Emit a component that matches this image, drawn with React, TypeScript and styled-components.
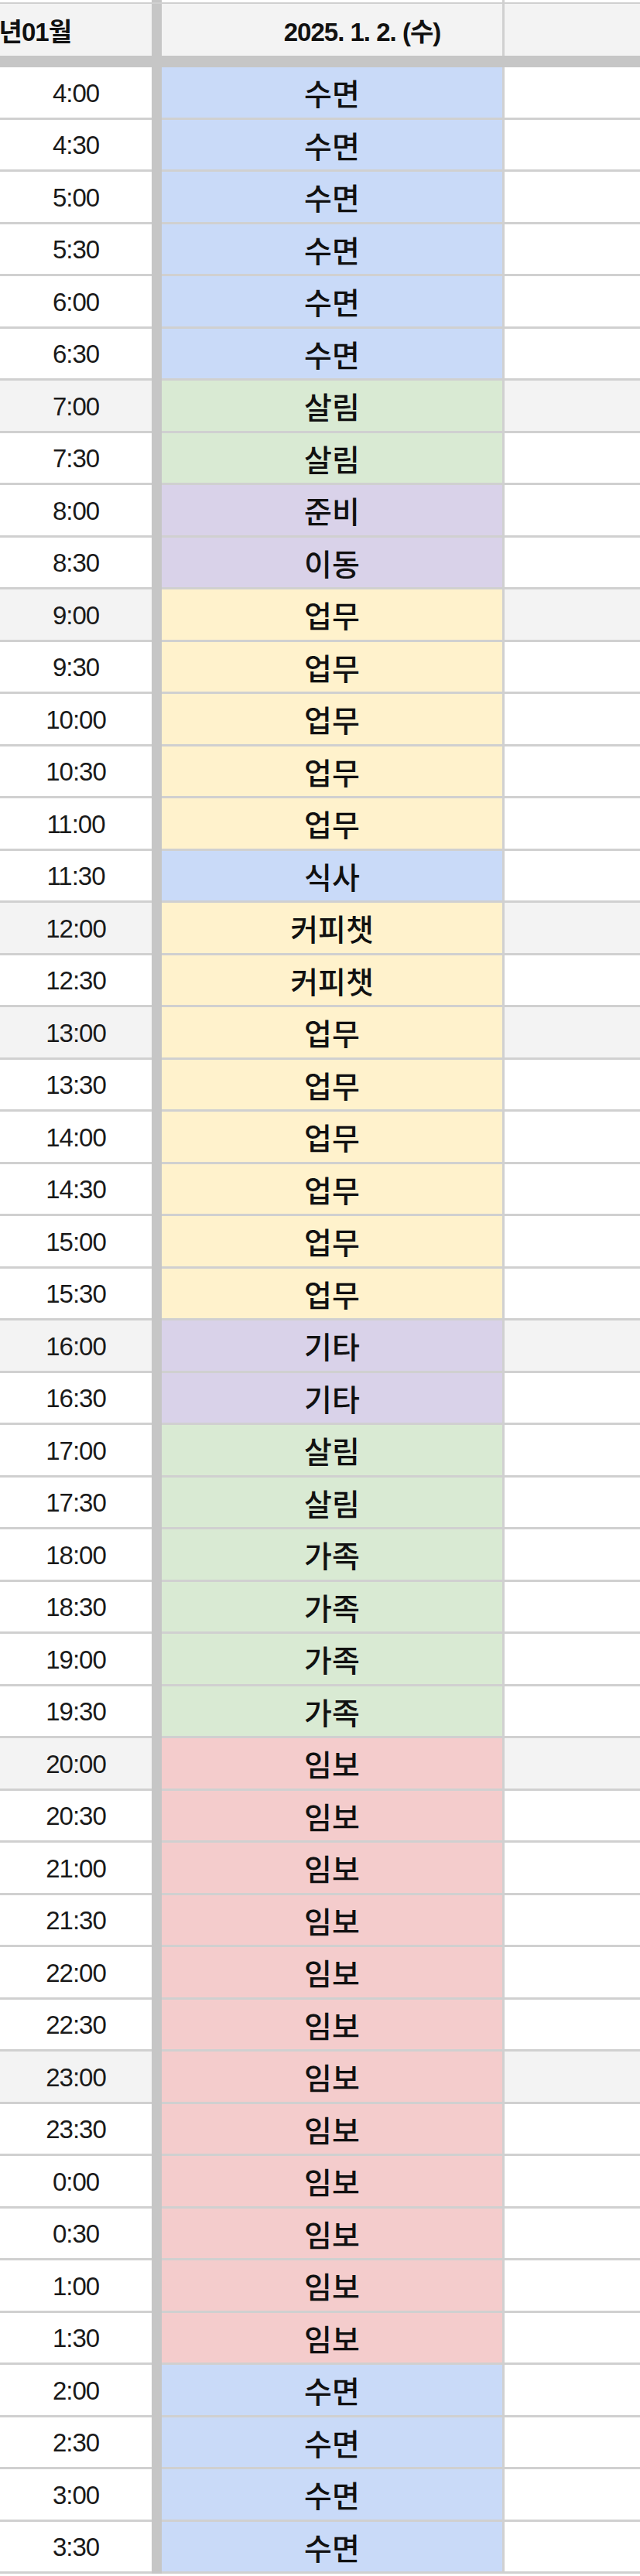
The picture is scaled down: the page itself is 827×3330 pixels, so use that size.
import React from "react";
import styled, { createGlobalStyle } from "styled-components";

type Kind = "sleep" | "home" | "etc" | "work" | "dog";

const FILL: Record<Kind, string> = {
  sleep: "#c9daf8",
  home: "#d9ead3",
  etc: "#d9d2e9",
  work: "#fff2cc",
  dog: "#f4cccc",
};

const SCHEDULE: [string, string, Kind][] = [
  ["4:00", "수면", "sleep"],
  ["4:30", "수면", "sleep"],
  ["5:00", "수면", "sleep"],
  ["5:30", "수면", "sleep"],
  ["6:00", "수면", "sleep"],
  ["6:30", "수면", "sleep"],
  ["7:00", "살림", "home"],
  ["7:30", "살림", "home"],
  ["8:00", "준비", "etc"],
  ["8:30", "이동", "etc"],
  ["9:00", "업무", "work"],
  ["9:30", "업무", "work"],
  ["10:00", "업무", "work"],
  ["10:30", "업무", "work"],
  ["11:00", "업무", "work"],
  ["11:30", "식사", "sleep"],
  ["12:00", "커피챗", "work"],
  ["12:30", "커피챗", "work"],
  ["13:00", "업무", "work"],
  ["13:30", "업무", "work"],
  ["14:00", "업무", "work"],
  ["14:30", "업무", "work"],
  ["15:00", "업무", "work"],
  ["15:30", "업무", "work"],
  ["16:00", "기타", "etc"],
  ["16:30", "기타", "etc"],
  ["17:00", "살림", "home"],
  ["17:30", "살림", "home"],
  ["18:00", "가족", "home"],
  ["18:30", "가족", "home"],
  ["19:00", "가족", "home"],
  ["19:30", "가족", "home"],
  ["20:00", "임보", "dog"],
  ["20:30", "임보", "dog"],
  ["21:00", "임보", "dog"],
  ["21:30", "임보", "dog"],
  ["22:00", "임보", "dog"],
  ["22:30", "임보", "dog"],
  ["23:00", "임보", "dog"],
  ["23:30", "임보", "dog"],
  ["0:00", "임보", "dog"],
  ["0:30", "임보", "dog"],
  ["1:00", "임보", "dog"],
  ["1:30", "임보", "dog"],
  ["2:00", "수면", "sleep"],
  ["2:30", "수면", "sleep"],
  ["3:00", "수면", "sleep"],
  ["3:30", "수면", "sleep"],
];

// rows that got the grey band in the sheet
const MARKED = ["7:00", "9:00", "12:00", "13:00", "16:00", "20:00", "23:00"];

const App = () => {
  return (
    <Sheet>
      <GlobalStyle />
      <TopRow>
        <Cell />
        <Divider />
        <Cell />
        <Line />
        <Cell />
      </TopRow>
      <HeaderRow>
        <HeaderCell align="flex-end">
          <HeaderText>2025년01월</HeaderText>
        </HeaderCell>
        <Divider />
        <HeaderCell align="center" shift={78}>
          <HeaderText>2025. 1. 2. (수)</HeaderText>
        </HeaderCell>
        <Line />
        <HeaderCell align="center" />
      </HeaderRow>
      <FreezeBar />
      {SCHEDULE.map(([time, label, kind]) => {
        const marked = MARKED.includes(time);
        return (
          <Row key={time}>
            <TimeCell marked={marked}>{time}</TimeCell>
            <Divider />
            <TaskCell fill={FILL[kind]}>{label}</TaskCell>
            <Line />
            <BlankCell marked={marked} />
          </Row>
        );
      })}
    </Sheet>
  );
};

export default App;

const GlobalStyle = createGlobalStyle`
  html, body {
    margin: 0;
    padding: 0;
    background: #ffffff;
  }

  body {
    font-family: "Liberation Sans", "Noto Sans CJK KR", sans-serif;
    color: #111;
  }
`;

const Sheet = styled.div`
  width: 827px;
  display: flex;
  flex-direction: column;
  overflow: hidden;
`;

const columns = `196px 13px 440px 3px 1fr`;

const TopRow = styled.div`
  display: grid;
  grid-template-columns: ${columns};
  height: 5px;
  box-sizing: border-box;
  border-bottom: 2px solid #d0d0d0;
`;

const HeaderRow = styled.div`
  display: grid;
  grid-template-columns: ${columns};
  height: 67px;
  background: #f3f3f3;
`;

const HeaderCell = styled.div<{ align: string; shift?: number }>`
  display: flex;
  align-items: center;
  justify-content: ${({ align }) => align};
  overflow: hidden;
  white-space: nowrap;
  padding-right: ${({ align }) => (align === "flex-end" ? "104px" : "0")};
  padding-left: ${({ shift }) => (shift ? `${shift}px` : "0")};
`;

const HeaderText = styled.span`
  font-family: "Liberation Sans", "Noto Sans CJK KR", sans-serif;
  font-size: 33px;
  font-weight: 700;
  letter-spacing: -1px;
  color: #111;
`;

const FreezeBar = styled.div`
  height: 15px;
  background: #c6c6c6;
`;

const Row = styled.div`
  display: grid;
  grid-template-columns: ${columns};
  height: 67.5px;
`;

const Cell = styled.div``;

const Divider = styled.div`
  background: #c6c6c6;
`;

const Line = styled.div`
  background: #d0d0d0;
`;

const TimeCell = styled.div<{ marked: boolean }>`
  display: flex;
  align-items: center;
  justify-content: center;
  box-sizing: border-box;
  border-bottom: 3px solid #d0d0d0;
  padding-top: 3px;
  background: ${({ marked }) => (marked ? "#f3f3f3" : "#ffffff")};
  font-family: "Liberation Sans", sans-serif;
  font-size: 33px;
  letter-spacing: -1px;
  color: #1a1a1a;
`;

const TaskCell = styled.div<{ fill: string }>`
  display: flex;
  align-items: center;
  justify-content: center;
  box-sizing: border-box;
  border-bottom: 3px solid #d0d0d0;
  background: ${({ fill }) => fill};
  font-family: "Noto Sans CJK KR", sans-serif;
  font-size: 39px;
  font-weight: 500;
  color: #111;
`;

const BlankCell = styled.div<{ marked: boolean }>`
  box-sizing: border-box;
  border-bottom: 3px solid #d0d0d0;
  background: ${({ marked }) => (marked ? "#f3f3f3" : "#ffffff")};
`;
